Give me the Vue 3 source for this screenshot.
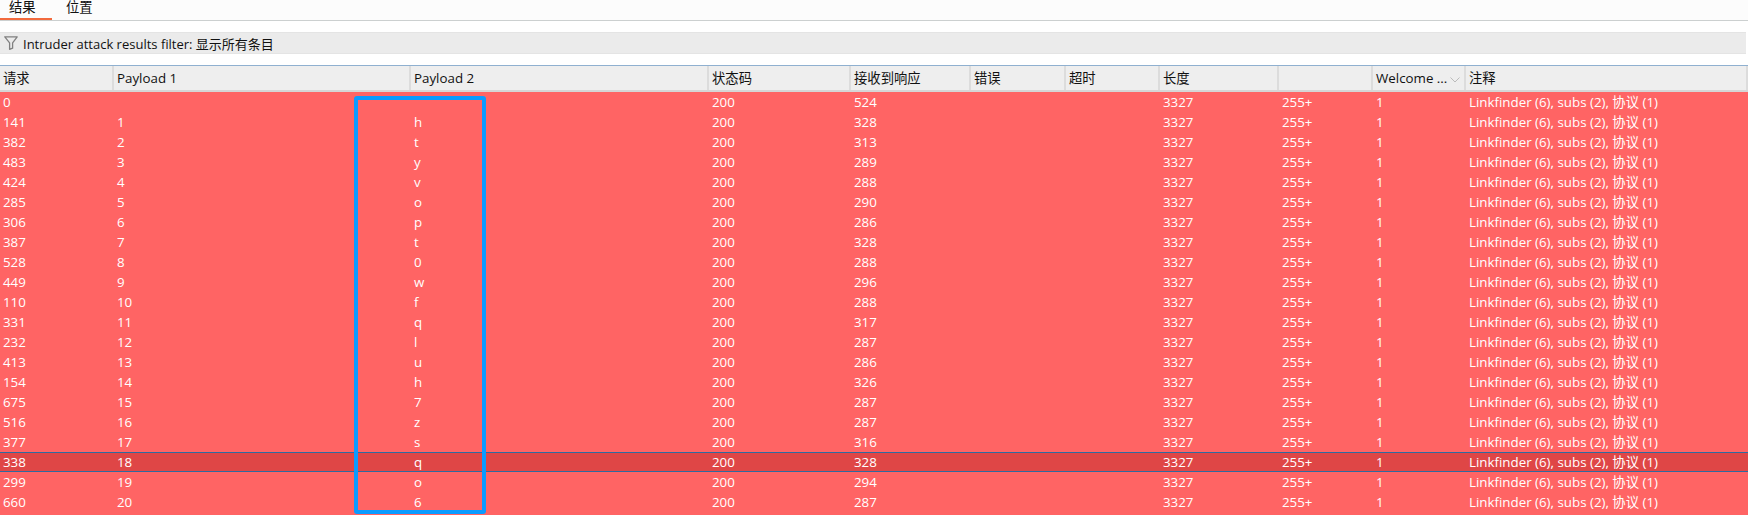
<script setup>
const cols = [114, 297, 298, 142, 120, 95, 94, 119, 94, 93, 282]
const heads = ['请求', 'Payload 1', 'Payload 2', '状态码', '接收到响应', '错误', '超时', '长度', '', 'Welcome ...', '注释']
const req = [0,141,382,483,424,285,306,387,528,449,110,331,232,413,154,675,516,377,338,299,660]
const p2 = ['', 'h','t','y','v','o','p','t','0','w','f','q','l','u','h','7','z','s','q','o','6']
const resp = [524,328,313,289,288,290,286,328,288,296,288,317,287,286,326,287,287,316,328,294,287]
const rows = req.map((r, i) => ({
  r, sel: i === 18,
  cells: [r, i === 0 ? '' : i, p2[i], 200, resp[i], '', '', 3327, '255+', 1, 'Linkfinder (6), subs (2), 协议 (1)']
}))
</script>

<template>
  <div class="page">
    <div class="tabs">
      <div class="tab active">结果</div>
      <div class="tab">位置</div>
    </div>
    <div class="filter">
      <svg class="funnel" width="14" height="14" viewBox="0 0 14 14" fill="none" stroke="#808080" stroke-width="1.3">
        <path d="M0.8 0.8h12.4L8.6 6.8v5.4L5.6 13.3V6.8z" stroke-linejoin="round" />
      </svg>
      <span>Intruder attack results filter: 显示所有条目</span>
    </div>
    <div class="table">
      <div class="row head">
        <div v-for="(h, i) in heads" :key="i" class="cell" :style="{ width: cols[i] + 'px' }">
          <span>{{ h }}</span>
          <svg v-if="i === 9" class="sort" width="10" height="6" viewBox="0 0 10 6" fill="none" stroke="#bbb">
            <path d="M0.5 0.5l4.5 4.5 4.5-4.5" />
          </svg>
        </div>
      </div>
      <div v-for="row in rows" :key="row.r" class="row body" :class="{ sel: row.sel }">
        <div v-for="(c, i) in row.cells" :key="i" class="cell" :style="{ width: cols[i] + 'px' }">{{ c }}</div>
      </div>
      <div class="box"></div>
    </div>
  </div>
</template>

<style>
html, body { margin: 0; background: #fff; }
</style>

<style scoped>
.page {
  width: 1748px;
  height: 515px;
  overflow: hidden;
  display: flex;
  flex-direction: column;
  background: #fff;
  font-family: "Open Sans", "Noto Sans CJK SC", sans-serif;
  font-size: 13.33px;
  color: #111;
}
.tabs {
  display: flex;
  flex: none;
  height: 20px;
  border-bottom: 1px solid #ccd0d0;
  background: #fcfcfc;
}
.tab {
  width: 52px;
  height: 20px;
  box-sizing: border-box;
  font-family: "Liberation Sans", "Noto Sans CJK SC", sans-serif;
  line-height: 15px;
  padding-left: 9px;
  margin-right: 5px;
}
.active { border-bottom: 2px solid #f26a3d; }
.filter {
  flex: none;
  margin: 11px 2px 0 0;
  height: 20px;
  background: #ebebeb;
  border-top: 1px solid #e4e4e4;
  border-bottom: 1px solid #e4e4e4;
  display: flex;
  align-items: center;
  gap: 5px;
  padding-left: 4px;
  font-size: 13px;
}
.table {
  position: relative;
  flex: 1;
  margin-top: 11px;
  border-top: 1px solid #8fb0d0;
  background: #ff6464;
}
.row { display: flex; }
.head {
  height: 24px;
  background: #eee;
  border-bottom: 2px solid #d6d6d6;
}
.body {
  height: 20px;
  color: #fff;
  line-height: 19px;
}
.sel {
  background: #df4646;
  box-shadow: inset 0 1px 0 #2e6a9f, inset 0 -1px 0 #2e6a9f;
}
.cell {
  box-sizing: border-box;
  padding: 1px 0 0 3px;
  white-space: nowrap;
  overflow: hidden;
}
.head .cell {
  padding-top: 0;
  border-right: 2px solid #dcdcdc;
  line-height: 24px;
  position: relative;
}
.sort { position: absolute; right: 4px; top: 11px; }
.box {
  position: absolute;
  left: 354px;
  top: 30px;
  width: 132px;
  height: 418px;
  box-sizing: border-box;
  border: 4px solid #0a9bff;
  border-radius: 3px;
}
</style>
